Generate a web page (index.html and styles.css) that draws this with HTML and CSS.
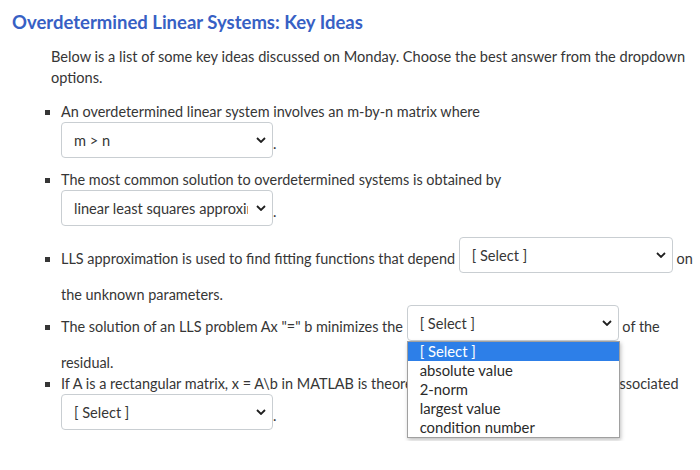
FILE: index.html
```html
<!DOCTYPE html>
<html>
<head>
<meta charset="utf-8">
<link rel="stylesheet" href="styles.css">
</head>
<body>
<div class="page">
  <h2 class="title">Overdetermined Linear Systems: Key Ideas</h2>
  <div class="content">
    <p class="intro">Below is a list of some key ideas discussed on Monday. Choose the best answer from the dropdown options.</p>
    <ul class="ideas">
      <li>An overdetermined linear system involves an m-by-n matrix where <span class="nw"><span class="select"><span class="sel-text">m &gt; n</span><svg class="chev" viewBox="0 0 10 6" width="10" height="6"><path d="M1 1 L5 5 L9 1" fill="none" stroke="#1f1f1f" stroke-width="1.8"/></svg></span>.</span></li>
      <li>The most common solution to overdetermined systems is obtained by <span class="nw"><span class="select"><span class="sel-text">linear least squares approximation</span><svg class="chev" viewBox="0 0 10 6" width="10" height="6"><path d="M1 1 L5 5 L9 1" fill="none" stroke="#1f1f1f" stroke-width="1.8"/></svg></span>.</span></li>
      <li>LLS approximation is used to find fitting functions that depend <span class="select wide"><span class="sel-text">[ Select ]</span><svg class="chev" viewBox="0 0 10 6" width="10" height="6"><path d="M1 1 L5 5 L9 1" fill="none" stroke="#1f1f1f" stroke-width="1.8"/></svg></span> on the unknown parameters.</li>
      <li>The solution of an LLS problem Ax "=" b minimizes the <span class="select open"><span class="sel-text">[ Select ]</span><svg class="chev" viewBox="0 0 10 6" width="10" height="6"><path d="M1 1 L5 5 L9 1" fill="none" stroke="#1f1f1f" stroke-width="1.8"/></svg><span class="menu"><span class="opt active">[ Select ]</span><span class="opt">absolute value</span><span class="opt">2-norm</span><span class="opt">largest value</span><span class="opt">condition number</span></span></span> of the residual.</li>
      <li>If A is a rectangular matrix, x = A\b in MATLAB is theoretically equivalent to solving the associated <span class="nw"><span class="select"><span class="sel-text">[ Select ]</span><svg class="chev" viewBox="0 0 10 6" width="10" height="6"><path d="M1 1 L5 5 L9 1" fill="none" stroke="#1f1f1f" stroke-width="1.8"/></svg></span>.</span></li>
    </ul>
  </div>
</div>
</body>
</html>
```
FILE: styles.css
```css
html, body {
  margin: 0;
  padding: 0;
  background: #ffffff;
}
body {
  font-family: Lato, "Liberation Sans", sans-serif;
  font-size: 14.6px;
  color: #363636;
}
.page {
  padding: 10px 4px 0 12px;
}
.title {
  margin: 0;
  font-size: 18.5px;
  font-weight: 700;
  line-height: 24px;
  color: #3760c4;
}
.content {
  margin-left: 39px;
}
.intro {
  margin: 12px 0 13px 0;
  padding-right: 4px;
  line-height: 21px;
}
.ideas {
  margin: 0;
  padding-left: 10px;
  list-style: square;
  font-size: 14.45px;
  line-height: 21px;
}
.nw {
  white-space: nowrap;
}
.select {
  position: relative;
  display: inline-flex;
  align-items: center;
  box-sizing: border-box;
  width: 212px;
  height: 36px;
  margin-bottom: 11px;
  padding: 0 6px 0 12px;
  border: 1px solid #c9ced2;
  border-radius: 4px;
  background: #fff;
  vertical-align: middle;
  color: #363636;
  font-size: 14.6px;
}
.select.wide {
  width: 214px;
}
.sel-text {
  flex: 1;
  min-width: 0;
  overflow: hidden;
  white-space: nowrap;
  margin-right: 8px;
}
.chev {
  flex: none;
}
.menu {
  position: absolute;
  left: -1px;
  top: 35px;
  width: 213px;
  box-sizing: border-box;
  display: flex;
  flex-direction: column;
  background: #fff;
  border: 1px solid #a0a0a0;
  box-shadow: 1px 2px 4px rgba(0,0,0,0.25);
  z-index: 5;
  line-height: 19px;
  color: #2a2a2a;
}
.opt {
  padding: 0 12px;
  height: 19px;
  font-size: 14.8px;
}
.opt.active {
  background: #2d7fe8;
  color: #fff;
}
```
